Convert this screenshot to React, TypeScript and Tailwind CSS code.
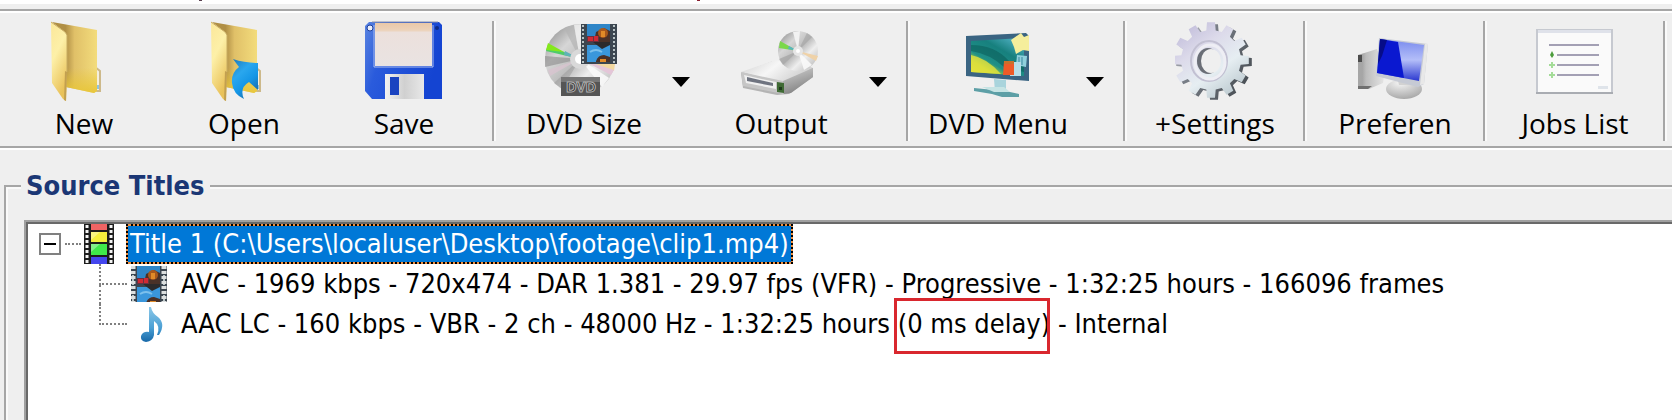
import React, { useState } from 'react'

type IconProps = { className?: string }

const FolderShape: React.FC<{ id: string }> = ({ id }) => (
  <>
    <defs>
      <linearGradient id={`${id}-front`} x1="0" y1="0" x2="0.4" y2="1">
        <stop offset="0" stopColor="#fbe79a" />
        <stop offset="0.45" stopColor="#fdf0a8" />
        <stop offset="1" stopColor="#e9c25a" />
      </linearGradient>
      <linearGradient id={`${id}-back`} x1="0" y1="0" x2="1" y2="0">
        <stop offset="0.3" stopColor="#b08f45" />
        <stop offset="0.5" stopColor="#e0c068" />
        <stop offset="1" stopColor="#f3dc7c" />
      </linearGradient>
      <linearGradient id={`${id}-glow`} x1="0" y1="0" x2="0" y2="1">
        <stop offset="0.6" stopColor="#e8c63a" stopOpacity="0" />
        <stop offset="1" stopColor="#e8c63a" />
      </linearGradient>
    </defs>
    <path d="M51 46l5 4v20h-7z" fill="#f4efe0" stroke="#cdb98a" strokeWidth="2" />
    <path d="M53 64h2v4h-2z" fill="#8fc3e0" />
    <path d="M8 1l45 8v61l-3 2-28-6V12z" fill={`url(#${id}-back)`} />
    <path d="M22 10l31-1v61l-3 2-28-6z" fill={`url(#${id}-glow)`} />
    <path d="M7 1l14 10 2 3v37l-1 29-3-2L8 62z" fill={`url(#${id}-front)`} />
    <path d="M7 1l14 10 2 3v37" fill="none" stroke="#c9ad62" strokeWidth="1" />
    <path d="M21 50l2 1-1 29-2-1z" fill="#c2a050" />
  </>
)

const NewIcon: React.FC<IconProps> = ({ className }) => (
  <svg viewBox="0 0 80 80" className={className} aria-hidden="true">
    <FolderShape id="new" />
  </svg>
)

const OpenIcon: React.FC<IconProps> = ({ className }) => (
  <svg viewBox="0 0 80 80" className={className} aria-hidden="true">
    <defs>
      <linearGradient id="open-arrow" x1="0" y1="0" x2="0.6" y2="1">
        <stop offset="0" stopColor="#1f78b8" />
        <stop offset="0.4" stopColor="#2aa7ee" />
        <stop offset="0.7" stopColor="#1496e6" />
        <stop offset="1" stopColor="#1a6fb0" />
      </linearGradient>
    </defs>
    <FolderShape id="open" />
    <path d="M29 38q12 4 25 4v27l-9-8q-10 6-5 17-11-5-12-16-1-10 7-16z" fill="url(#open-arrow)" />
  </svg>
)

const SaveIcon: React.FC<IconProps> = ({ className }) => (
  <svg viewBox="0 0 80 80" className={className} aria-hidden="true">
    <defs>
      <linearGradient id="save-body" x1="0" y1="0" x2="1" y2="0.3">
        <stop offset="0" stopColor="#5a84e0" />
        <stop offset="0.3" stopColor="#2a5bdc" />
        <stop offset="1" stopColor="#1444d2" />
      </linearGradient>
      <linearGradient id="save-label" x1="0" y1="0" x2="0" y2="1">
        <stop offset="0" stopColor="#eac8a8" />
        <stop offset="0.17" stopColor="#ecd2ba" />
        <stop offset="0.22" stopColor="#ece0dc" />
        <stop offset="1" stopColor="#e9e3e2" />
      </linearGradient>
      <linearGradient id="save-shutter" x1="0" y1="0" x2="1" y2="0">
        <stop offset="0" stopColor="#f2f2f2" />
        <stop offset="0.5" stopColor="#d0d0d0" />
        <stop offset="1" stopColor="#e8e8e8" />
      </linearGradient>
    </defs>
    <path d="M5 1h70l3 3v74H8L1 70V5z" fill="url(#save-body)" />
    <path d="M8 1h66" stroke="#8a90a8" strokeWidth="1" />
    <rect x="11" y="2" width="57" height="43" fill="url(#save-label)" />
    <path d="M10 4v42h59V4" fill="none" stroke="#a9bdf0" strokeWidth="1" />
    <rect x="21" y="53" width="39" height="25" fill="url(#save-shutter)" />
    <rect x="26" y="56" width="9" height="18" fill="#1a43c0" />
    <circle cx="6" cy="7" r="3" fill="#e8ecf8" stroke="#1d3f9c" strokeWidth="1" />
    <circle cx="73" cy="7" r="2" fill="#0d2a84" />
  </svg>
)

// Film frame with a blue sky, a red plane and an orange figure, repeated per cell.
const FilmArt: React.FC = () => (
  <>
    <rect x="0" y="0" width="36" height="40" fill="#3c4650" />
    <rect x="6" y="0" width="23" height="18" fill="#2f86c8" />
    <rect x="6" y="21" width="23" height="17" fill="#3a97dc" />
    <path d="M15 8l8-4 6 3v11H13z" fill="#4a3128" />
    <path d="M6 12h12v6H6z" fill="#6a3040" />
    <path d="M7 13h5v4H7zM13 12h4v5h-4z" fill="#d02a34" />
    <path d="M12 18h17v3l-8 4z" fill="#2c2a2c" />
    <circle cx="22" cy="9" r="5" fill="#a8581c" />
    <path d="M20 7h4v6h-4z" fill="#e08a28" />
    <path d="M15 37q2-6 8-6l6 2v5H15z" fill="#4a3128" />
    <path d="M19 35h6v3h-6z" fill="#e08a28" />
    <path d="M9 28q6-4 12 0" fill="none" stroke="#7cc0ec" strokeWidth="2" />
    <path d="M2 1v38M33 1v38" stroke="#b9c4c6" strokeWidth="2" strokeDasharray="2 2" />
  </>
)

const DiscDefs: React.FC<{ id: string }> = ({ id }) => (
  <defs>
    <linearGradient id={id} x1="0.1" y1="0.1" x2="0.9" y2="0.9">
      <stop offset="0" stopColor="#9c9c9c" />
      <stop offset="0.25" stopColor="#d6d6d6" />
      <stop offset="0.5" stopColor="#bdbdbd" />
      <stop offset="0.7" stopColor="#eeeeee" />
      <stop offset="1" stopColor="#c0c0c0" />
    </linearGradient>
  </defs>
)

const DvdSizeIcon: React.FC<IconProps> = ({ className }) => (
  <svg viewBox="0 0 80 80" className={className} aria-hidden="true">
    <DiscDefs id="dvd-disc" />
    <circle cx="36" cy="38" r="35" fill="url(#dvd-disc)" />
    <path d="M36 38L20 7 30 4z" fill="#b4b4b4" opacity="0.7" />
    <path d="M36 38L30 4l9-1z" fill="#f0f0f0" opacity="0.8" />
    <path d="M36 38L1 35v11z" fill="#8a8a8a" opacity="0.6" />
    <path d="M36 38L4 24l-2 6z" fill="#4ecb6c" />
    <path d="M20 31L4 22l-2 7z" fill="#84e81c" />
    <path d="M36 38l-15-8-1 4z" fill="#5fb2b8" />
    <path d="M36 38L4 49l2 6z" fill="#d8c4d0" opacity="0.8" />
    <path d="M36 38L10 62l8 6z" fill="#9a9a9a" opacity="0.5" />
    <path d="M36 38l34 12 1-7z" fill="#f2d8a0" />
    <path d="M36 38l31 16 3-5z" fill="#e4c6d8" />
    <path d="M36 38l22 28 7-9z" fill="#fafafa" opacity="0.9" />
    <circle cx="36" cy="38" r="10" fill="#d9d9d9" />
    <circle cx="36" cy="38" r="5" fill="#ffffff" />
    <g transform="translate(37 3)">
      <FilmArt />
    </g>
    <rect x="17" y="56" width="39" height="19" fill="#555555" />
    <rect x="17" y="56" width="39" height="5" fill="#777777" />
    <text x="37" y="71" textAnchor="middle" fontFamily="Liberation Sans, sans-serif" fontWeight="bold" fontSize="14" fill="#242424" stroke="#b4b4b4" strokeWidth="1">
      DVD
    </text>
  </svg>
)

const OutputIcon: React.FC<IconProps> = ({ className }) => (
  <svg viewBox="0 0 80 80" className={className} aria-hidden="true">
    <DiscDefs id="out-disc" />
    <defs>
      <linearGradient id="out-top" x1="0" y1="0" x2="1" y2="0.4">
        <stop offset="0" stopColor="#d0d0d0" />
        <stop offset="0.5" stopColor="#f6f6f6" />
        <stop offset="1" stopColor="#cfcfcf" />
      </linearGradient>
      <linearGradient id="out-side" x1="0" y1="0" x2="0.4" y2="1">
        <stop offset="0" stopColor="#d4d4d4" />
        <stop offset="1" stopColor="#838383" />
      </linearGradient>
    </defs>
    <path d="M0 52l32-12 40 7v9L48 73l-12 1-34-7z" fill="#b4b4b4" />
    <path d="M0 51l34-12 38 8-30 15z" fill="url(#out-top)" />
    <path d="M42 60l30-13v9L50 72l-7 1z" fill="url(#out-side)" />
    <path d="M0 51l42 9v13L2 65z" fill="#c6c6c6" />
    <path d="M3 54l32 7v7L5 62z" fill="#f0f0f0" />
    <path d="M6 56l26 6v3L6 60z" fill="#6f7480" />
    <path d="M36 61l7 1v10l-7-1z" fill="#3f6a34" />
    <path d="M38 66h3v3h-3z" fill="#1f3a1c" />
    <circle cx="57" cy="30" r="20" fill="url(#out-disc)" />
    <path d="M57 30L52 11l7-1z" fill="#f2f2f2" />
    <path d="M57 30L66 12l5 4z" fill="#9c9c9c" opacity="0.5" />
    <path d="M57 30L39 20l-1 7z" fill="#7ad84a" />
    <path d="M57 30l-9-5-1 3z" fill="#58b4c0" />
    <path d="M57 30l20 5-2 5z" fill="#efd2a8" />
    <path d="M57 30L38 38l4 6z" fill="#9c9c9c" opacity="0.6" />
    <path d="M57 30l6 19 8-5z" fill="#fafafa" opacity="0.9" />
    <circle cx="57" cy="30" r="5" fill="#e6e6e6" />
    <circle cx="57" cy="30" r="2" fill="#ffffff" />
  </svg>
)

const DvdMenuIcon: React.FC<IconProps> = ({ className }) => (
  <svg viewBox="0 0 80 80" className={className} aria-hidden="true">
    <defs>
      <linearGradient id="menu-screen" x1="0" y1="1" x2="0.8" y2="0">
        <stop offset="0" stopColor="#e8e63a" />
        <stop offset="0.25" stopColor="#a9cf3c" />
        <stop offset="0.4" stopColor="#1f8f86" />
        <stop offset="0.7" stopColor="#17807e" />
        <stop offset="1" stopColor="#4eaec0" />
      </linearGradient>
    </defs>
    <path d="M36 58l12 1v12H37z" fill="#a9d4dc" />
    <path d="M16 67l20 2 16 2 9 2v3H44l-10-3-18-3z" fill="#5d9fa6" />
    <path d="M24 66h22l6 5H36z" fill="#c6e4e4" />
    <path d="M8 15l60-3 3 3v45L8 55z" fill="#3a6482" />
    <path d="M13 20l53-3v38l-53-4z" fill="url(#menu-screen)" />
    <path d="M13 24q24 0 38 16l15 2v9L46 46Q32 33 13 30z" fill="#0c5f5c" opacity="0.6" />
    <path d="M13 34q16 3 30 19l-30-2z" fill="#e6e23c" opacity="0.8" />
    <path d="M53 19l10-7 3 4 5-2v16l-6-1-7 4-2-7z" fill="#f5ee9c" />
    <path d="M59 34l10 1-1 11-10-2z" fill="#8fd0dc" />
    <path d="M61 36v8M64 36v8" stroke="#38859c" strokeWidth="1" />
    <path d="M53 41h10v14H52z" fill="#b7dde8" />
    <path d="M46 40h10v14H45z" fill="#ee5a28" />
    <path d="M46 40h10v3H46z" fill="#c8702c" />
  </svg>
)

function gearOutline(cx: number, cy: number, inner: number, outer: number, teeth: number): string {
  const step = (Math.PI * 2) / teeth
  const points: string[] = []
  for (let i = 0; i < teeth; i++) {
    const mid = i * step
    const corners: [number, number][] = [
      [inner, -0.3],
      [outer, -0.2],
      [outer, 0.2],
      [inner, 0.3],
    ]
    corners.forEach(([radius, offset]) => {
      const angle = mid + offset * step
      points.push(`${(cx + radius * Math.cos(angle)).toFixed(1)} ${(cy + radius * Math.sin(angle)).toFixed(1)}`)
    })
  }
  return `M${points.join('L')}Z`
}

const gearFace = gearOutline(36, 39, 30, 38, 12)
const gearDepth = gearOutline(39, 41, 30, 38, 12)

const SettingsIcon: React.FC<IconProps> = ({ className }) => (
  <svg viewBox="0 0 80 80" className={className} aria-hidden="true">
    <defs>
      <linearGradient id="gear-face" x1="0.1" y1="0" x2="0.8" y2="1">
        <stop offset="0" stopColor="#bdb8d8" />
        <stop offset="0.35" stopColor="#dcdaea" />
        <stop offset="0.65" stopColor="#e6eef2" />
        <stop offset="1" stopColor="#b8c6cc" />
      </linearGradient>
      <linearGradient id="gear-depth" x1="0" y1="0" x2="1" y2="0.6">
        <stop offset="0" stopColor="#d0d0d8" />
        <stop offset="0.4" stopColor="#7a7f88" />
        <stop offset="1" stopColor="#4c5258" />
      </linearGradient>
    </defs>
    <path d={gearDepth} fill="url(#gear-depth)" />
    <path d={gearFace} fill="url(#gear-face)" />
    <ellipse cx="34" cy="40" rx="18" ry="20" fill="none" stroke="#c2c0d2" strokeWidth="2" />
    <ellipse cx="35" cy="41" rx="15" ry="17" fill="none" stroke="#eeeef4" strokeWidth="3" />
    <ellipse cx="33" cy="40" rx="11" ry="13" fill="#6a6e76" />
    <ellipse cx="36" cy="40" rx="10" ry="12" fill="#efefef" />
  </svg>
)

const PreferencesIcon: React.FC<IconProps> = ({ className }) => (
  <svg viewBox="0 0 80 80" className={className} aria-hidden="true">
    <defs>
      <linearGradient id="pref-tower" x1="0" y1="0" x2="1" y2="0">
        <stop offset="0" stopColor="#8c8c8c" />
        <stop offset="0.3" stopColor="#bcbcbc" />
        <stop offset="1" stopColor="#e6e6e6" />
      </linearGradient>
      <linearGradient id="pref-screen" x1="0" y1="0" x2="0" y2="1">
        <stop offset="0.1" stopColor="#8494f0" />
        <stop offset="0.5" stopColor="#b4bef8" />
        <stop offset="1" stopColor="#2a38d0" />
      </linearGradient>
      <radialGradient id="pref-base" cx="0.4" cy="0.2" r="0.9">
        <stop offset="0" stopColor="#f4f4f4" />
        <stop offset="1" stopColor="#a0a0a0" />
      </radialGradient>
    </defs>
    <path d="M3 34l19-6 8 22-2 12-14 6H3z" fill="url(#pref-tower)" />
    <path d="M3 34l4 1v33H3z" fill="#a6a6a6" />
    <path d="M3 34h4v7H3z" fill="#4c4c4c" />
    <path d="M3 65h14l-4 3H3z" fill="#707070" />
    <ellipse cx="49" cy="68" rx="18" ry="10" fill="url(#pref-base)" />
    <path d="M42 56h16l-2 8H44z" fill="#d2d2d2" />
    <path d="M24 17l49 6-4 40-6 3-42-11z" fill="#c6cad4" />
    <path d="M70 23l3 0-4 40-4 1z" fill="#e8e8e8" />
    <path d="M25 18l44 6-5 36-42-8z" fill="url(#pref-screen)" />
    <path d="M25 18l18 3 6 36-27-5z" fill="#0a18d0" />
    <path d="M25 18l7 1-5 16-4 8z" fill="#060c88" />
  </svg>
)

const JobsIcon: React.FC<IconProps> = ({ className }) => (
  <svg viewBox="0 0 80 80" className={className} aria-hidden="true">
    <rect x="2" y="9" width="75" height="63" fill="#fafafa" stroke="#c6c9d0" strokeWidth="2" />
    <rect x="3" y="9" width="73" height="3" fill="#dfe2ea" />
    <path d="M1 72h77" stroke="#a9acb2" strokeWidth="2" />
    <path d="M14 24h50M22 34h42M22 44h42M22 54h42" stroke="#a3a0b4" strokeWidth="2" />
    <path d="M15 34l2-4 2 4-2 3z" fill="#4c9c3c" />
    <path d="M14 44h6M17 41v6M14 54h6M17 51v6" stroke="#a4dc98" strokeWidth="2" />
    <path d="M63 65h10v3H63z" fill="#dfe4ea" />
  </svg>
)

const FilmStripIcon: React.FC<IconProps> = ({ className }) => (
  <svg viewBox="0 0 30 40" className={className} aria-hidden="true">
    <rect width="30" height="40" fill="#1c1c1c" />
    <rect x="7" y="0" width="16" height="6" fill="#f06464" />
    <rect x="7" y="8" width="16" height="10" fill="#f4ee3c" />
    <rect x="7" y="20" width="16" height="11" fill="#3fe84a" />
    <rect x="7" y="33" width="16" height="7" fill="#4446ee" />
    <path d="M7 8h9l-9 8zM7 20h9l-9 8z" fill="#ffffff" opacity="0.35" />
    <path d="M3 1v39M27 1v39" stroke="#f4f4f4" strokeWidth="3" strokeDasharray="3 2" />
  </svg>
)

const VideoIcon: React.FC<IconProps> = ({ className }) => (
  <svg viewBox="0 0 36 36" className={className} aria-hidden="true">
    <FilmArt />
    <path d="M2 0v36M33 0v36" stroke="#dde0e0" strokeWidth="5" strokeDasharray="3 2" />
  </svg>
)

const NoteIcon: React.FC<IconProps> = ({ className }) => (
  <svg viewBox="0 0 36 36" className={className} aria-hidden="true">
    <defs>
      <linearGradient id="note" x1="0" y1="0" x2="0" y2="1">
        <stop offset="0" stopColor="#8cc8e8" />
        <stop offset="0.6" stopColor="#4a9fd4" />
        <stop offset="1" stopColor="#1768a8" />
      </linearGradient>
    </defs>
    <path d="M18 1h2q1 6 7 10 8 7 1 18h-2q4-9-3-14v14q-1 6-8 7-6-1-5-6 2-5 8-4z" fill="url(#note)" />
  </svg>
)

type Tool = {
  label: string
  icon: React.FC<IconProps>
  menu?: boolean
}

const toolGroups: Tool[][] = [
  [
    { label: 'New', icon: NewIcon },
    { label: 'Open', icon: OpenIcon },
    { label: 'Save', icon: SaveIcon },
  ],
  [
    { label: 'DVD Size', icon: DvdSizeIcon, menu: true },
    { label: 'Output', icon: OutputIcon, menu: true },
  ],
  [{ label: 'DVD Menu', icon: DvdMenuIcon, menu: true }],
  [{ label: '+Settings', icon: SettingsIcon }],
  [{ label: 'Preferen', icon: PreferencesIcon }],
  [{ label: 'Jobs List', icon: JobsIcon }],
]

const ToolButton: React.FC<{ tool: Tool }> = ({ tool }) => {
  const Icon = tool.icon
  return (
    <div className="flex shrink-0">
      <button type="button" className="flex w-40 flex-col items-center">
        <Icon className="size-20" />
        <span className="mt-1 text-[28px] leading-9 whitespace-nowrap">{tool.label}</span>
      </button>
      {tool.menu ? (
        <button type="button" aria-label={`${tool.label} options`} className="flex w-[37px] justify-center pt-14 pr-1">
          <svg viewBox="0 0 18 10" className="h-[10px] w-[18px]" aria-hidden="true">
            <path d="M0 0h18L9 10z" fill="#000000" />
          </svg>
        </button>
      ) : null}
    </div>
  )
}

const Toolbar: React.FC = () => (
  <div role="toolbar" aria-label="Main" className="flex h-[139px] items-start overflow-hidden border-y-2 border-[#a6a6a6] pt-[10px] pl-1 shadow-[inset_0_2px_0_#ffffff,0_2px_0_#ffffff]">
    {toolGroups.map((tools) => (
      <div key={tools[0].label} className="flex shrink-0">
        {tools.map((tool) => (
          <ToolButton key={tool.label} tool={tool} />
        ))}
        <div className="mr-[10px] ml-2 h-[120px] w-[2px] bg-[#a6a6a6] shadow-[2px_0_0_#fafafa]" />
      </div>
    ))}
  </div>
)

const Branch: React.FC<{ last?: boolean }> = ({ last }) => (
  <span className="flex w-7 shrink-0 flex-col self-stretch">
    <span className="h-[21px] border-b-2 border-l-2 border-dotted border-[#808080]" />
    {last ? null : <span className="flex-1 border-l-2 border-dotted border-[#808080]" />}
  </span>
)

const SourceTree: React.FC = () => {
  const [expanded, setExpanded] = useState(true)

  return (
    <ul role="tree" aria-label="Source Titles" className="text-[27px] leading-10 whitespace-nowrap text-black">
      <li role="treeitem" aria-expanded={expanded} aria-selected="true">
        <div className="flex h-10 items-center pl-[11px]">
          <button
            type="button"
            aria-label="Toggle Title 1"
            onClick={() => setExpanded(!expanded)}
            className="flex size-[22px] items-center justify-center border-2 border-[#808080] bg-white"
          >
            <span className="h-[2px] w-3 bg-black" />
          </button>
          <span className="ml-1 w-4 border-t-2 border-dotted border-[#808080]" />
          <FilmStripIcon className="ml-[3px] h-10 w-[30px]" />
          <span className="ml-3 h-10 border-2 border-dotted border-black bg-[#f09040]">
            <span className="block h-9 bg-[#0078d7] px-[2px] leading-9 text-white">
              Title 1 (C:\Users\localuser\Desktop\footage\clip1.mp4)
            </span>
          </span>
        </div>
        {expanded ? (
          <ul role="group" className="pl-[71px]">
            <li role="treeitem" className="flex h-10 items-center">
              <Branch />
              <VideoIcon className="ml-1 h-9 w-9 shrink-0" />
              <span className="ml-[14px]">
                AVC - 1969 kbps - 720x474 - DAR 1.381 - 29.97 fps (VFR) - Progressive - 1:32:25 hours - 166096 frames
              </span>
            </li>
            <li role="treeitem" className="flex h-10 items-center">
              <Branch last />
              <NoteIcon className="ml-1 h-9 w-9 shrink-0" />
              <span className="ml-[14px]">
                AAC LC - 160 kbps - VBR - 2 ch - 48000 Hz - 1:32:25 hours{' '}
                <span className="relative">
                  (0 ms delay)
                  <span className="absolute -top-[10px] right-0 -left-1 h-14 border-3 border-[#d9272e]" />
                </span>{' '}
                - Internal
              </span>
            </li>
          </ul>
        ) : null}
      </li>
    </ul>
  )
}

export default function App() {
  return (
    <div className="min-h-screen overflow-hidden bg-[#efefef] font-['Open_Sans','Noto_Sans',sans-serif] text-black">
      <div className="flex h-1 bg-white pl-[199px]">
        <span className="h-px w-[3px] bg-[#5a4050]" />
        <span className="ml-[495px] h-px w-[3px] bg-[#8a2030]" />
      </div>
      <div className="h-[5px]" />
      <Toolbar />
      <fieldset className="mt-5 ml-1 min-w-0 border-t-2 border-l-2 border-[#a6a6a6] font-['DejaVu_Sans_Condensed','Open_Sans',sans-serif] shadow-[inset_2px_2px_0_#fafafa]">
        <legend className="ml-[15px] bg-[#efefef] px-[5px] text-[27px] leading-9 font-bold text-[#1b3775]">Source Titles</legend>
        <div className="mt-4 ml-[18px] overflow-hidden border-t-2 border-l-2 border-[#a0a0a0] bg-[#696969] pt-[2px] pl-[2px]">
          <div className="min-h-49 bg-white">
            <SourceTree />
          </div>
        </div>
      </fieldset>
    </div>
  )
}
